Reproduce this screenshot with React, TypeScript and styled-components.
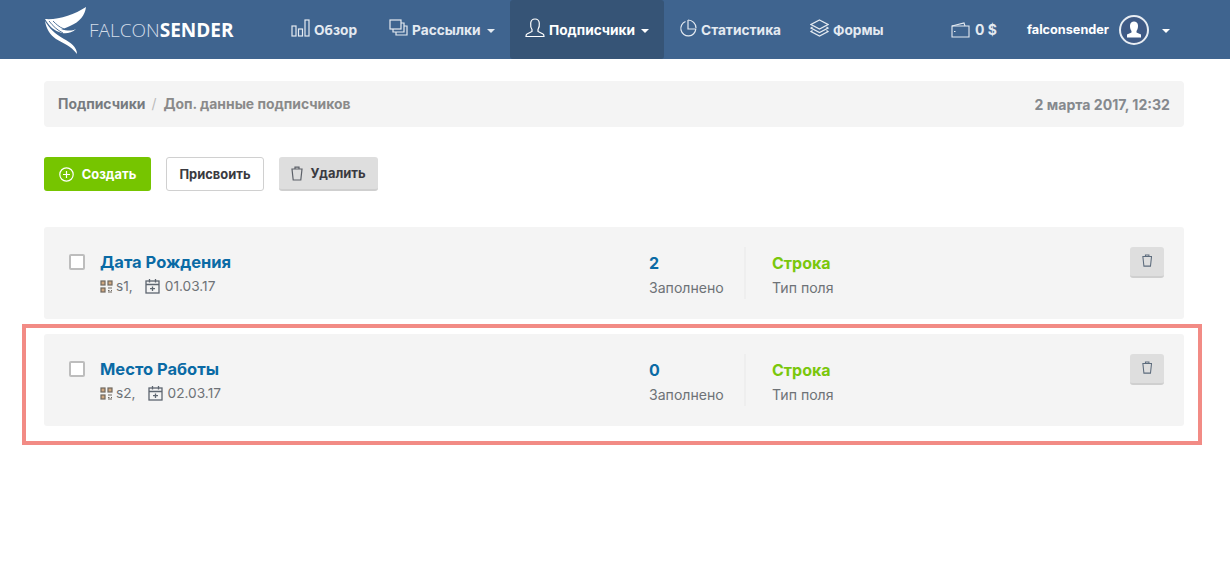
import React from "react";
import styled, { createGlobalStyle } from "styled-components";

const FONT = `"Inter", "Open Sans", "Liberation Sans", sans-serif`;

const Global = createGlobalStyle`
  html, body { margin: 0; padding: 0; background: #fff; }
  body { font-family: ${FONT}; }
  * { box-sizing: border-box; }
`;

const Page = styled.div`
  position: relative;
  width: 1230px;
  height: 565px;
  overflow: hidden;
`;

const Nav = styled.header`
  height: 59px;
  background: #3f648f;
  display: flex;
  align-items: stretch;
  padding-left: 44px;
`;

const Brand = styled.div`
  width: 232px;
  display: flex;
  align-items: center;
  flex: none;
`;

const BrandText = styled.span`
  margin-left: 2px;
  margin-top: 1px;
  font-family: "Open Sans", sans-serif;
  font-size: 19px;
  color: #d4dde8;
  font-weight: 300;
  white-space: nowrap;
  b { color: #fff; font-weight: 700; }
`;

const NavItem = styled.div<{ $active?: boolean; $width: number }>`
  width: ${(p) => p.$width}px;
  flex: none;
  display: flex;
  align-items: center;
  gap: 4px;
  padding: 1px 0 0 15px;
  background: ${(p) => (p.$active ? "#365476" : "transparent")};
  border-radius: ${(p) => (p.$active ? "3px" : "0")};
  color: ${(p) => (p.$active ? "#fff" : "#e4eaf1")};
  font-size: 13.7px;
  font-weight: 700;
  white-space: nowrap;
  svg { margin-top: -4px; }
`;

const Caret = styled.span`
  width: 0;
  height: 0;
  margin-left: 2px;
  margin-top: 2px;
  border-left: 4px solid transparent;
  border-right: 4px solid transparent;
  border-top: 4px solid currentColor;
`;

const Balance = styled.div`
  margin-left: 56px;
  width: 76px;
  flex: none;
  display: flex;
  align-items: center;
  gap: 5px;
  color: #e4eaf1;
  font-size: 14px;
  font-weight: 700;
`;

const User = styled.div`
  flex: none;
  display: flex;
  align-items: center;
  color: #fff;
  font-size: 12.7px;
  font-weight: 700;
`;

const Avatar = styled.span`
  width: 30px;
  height: 30px;
  margin-left: 10px;
  margin-right: 11px;
  border-radius: 50%;
  border: 2px solid #e8edf3;
  background: #3f5a85;
  display: flex;
  align-items: center;
  justify-content: center;
`;

const Main = styled.main`
  padding: 22px 46px 0 44px;
`;

const Crumbs = styled.div`
  height: 46px;
  background: #f4f4f4;
  border-radius: 4px;
  padding: 0 14px;
  display: flex;
  align-items: center;
  font-size: 13.9px;
  font-weight: 700;
  color: #8a8a8a;
`;

const CrumbLink = styled.span`
  color: #777b80;
`;

const CrumbSep = styled.span`
  margin: 0 7px 0 6px;
  font-weight: 400;
  color: #bbb;
`;

const CrumbDate = styled.span`
  margin-left: auto;
  font-size: 14.1px;
  color: #85898e;
`;

const Toolbar = styled.div`
  display: flex;
  gap: 15px;
  margin-top: 30px;
  margin-bottom: 36px;
`;

const Button = styled.button<{ $kind: "create" | "assign" | "remove" }>`
  height: 34px;
  padding: 0;
  width: ${(p) => ({ create: 107, assign: 98, remove: 99 }[p.$kind])}px;
  display: flex;
  align-items: center;
  justify-content: center;
  gap: ${(p) => (p.$kind === "create" ? 8 : 7)}px;
  border-radius: 3px;
  font: 700 12.9px ${FONT};
  color: ${(p) => (p.$kind === "create" ? "#fff" : "#3a3a40")};
  background: ${(p) => ({ create: "#76c500", assign: "#fff", remove: "#dedede" }[p.$kind])};
  border: ${(p) => (p.$kind === "assign" ? "1px solid #d0d0d0" : "0")};
  border-bottom: ${(p) =>
    p.$kind === "remove" ? "2px solid #cfcfcf" : p.$kind === "assign" ? "1px solid #d0d0d0" : "0"};
`;

const Card = styled.section`
  height: 92px;
  background: #f4f4f4;
  border-radius: 3px;
  margin-bottom: 15px;
  display: flex;
  align-items: flex-start;
  padding: 20px 20px 0 25px;
`;

const Check = styled.span`
  width: 16px;
  height: 16px;
  flex: none;
  margin-top: 7px;
  background: #fff;
  border: 2px solid #bdbdbd;
  border-radius: 2px;
`;

const Info = styled.div`
  width: 549px;
  flex: none;
  margin-left: 15px;
`;

const Title = styled.div`
  margin-top: 4px;
  font-size: 16.5px;
  line-height: 22px;
  font-weight: 700;
  color: #0a6aa5;
`;

const Meta = styled.div`
  display: flex;
  align-items: center;
  margin-top: 4px;
  font-size: 13.7px;
  line-height: 18px;
  color: #6e7277;
`;

const MetaGroup = styled.span<{ $inner: number; $after: number }>`
  display: inline-flex;
  align-items: center;
  gap: ${(p) => p.$inner}px;
  margin-right: ${(p) => p.$after}px;
`;

const Stat = styled.div<{ $width: number }>`
  width: ${(p) => p.$width}px;
  flex: none;
`;

const StatBorder = styled(Stat)`
  height: 52px;
  border-right: 2px solid #eeeeee;
`;

const StatValue = styled.div<{ $green?: boolean }>`
  margin-top: 4px;
  font-size: 16px;
  line-height: 24px;
  font-weight: 700;
  color: ${(p) => (p.$green ? "#7ac70c" : "#0a6aa5")};
`;

const StatLabel = styled.div`
  margin-top: 3px;
  font-size: 14.1px;
  line-height: 20px;
  color: #6e7277;
`;

const StatGap = styled.div`
  width: 26px;
  flex: none;
`;

const TrashButton = styled.button`
  width: 34px;
  height: 31px;
  padding: 0 0 2px;
  margin-left: auto;
  background: #dedede;
  border: 0;
  border-bottom: 2px solid #cfcfcf;
  border-radius: 3px;
  display: flex;
  align-items: center;
  justify-content: center;
`;

const Highlight = styled.div`
  position: absolute;
  left: 22px;
  top: 324px;
  width: 1180px;
  height: 121px;
  border: 4px solid #f28b85;
  pointer-events: none;
`;

const Falcon = () => (
  <svg width="43" height="48" viewBox="0 0 43 48" style={{ flex: "none" }}>
    <path fill="#fff" d="M1 13 C14 14 30 9 42 1 C41 9 36 16 26 20 C22 22 19 23 17 23 C23 25 28 25 32 23 C28 27 22 28 18 27 C10 25 5 20 1 13Z" />
    <path fill="#fff" d="M1 15 C2 22 6 29 12 33 C19 37 27 40 33 48 C33 41 26 36 20 33 C11 28 5 22 1 15Z" />
    <path fill="none" stroke="#3f648f" strokeWidth=".9" d="M5 15C9 20 13 24 19 27M9 15C12 18 15 21 20 23" />
  </svg>
);

const IconBars = () => (
  <svg width="19" height="18" viewBox="0 0 19 18" fill="none" stroke="#e4eaf1" strokeWidth="1.2">
    <rect x="1" y="7" width="4" height="10" />
    <rect x="7.5" y="10" width="4" height="7" />
    <rect x="14" y="1" width="4" height="16" />
  </svg>
);
const IconStack = () => (
  <svg width="19" height="18" viewBox="0 0 19 18" fill="none" stroke="#e4eaf1" strokeWidth="1.2">
    <rect x="1" y="1" width="11" height="9" />
    <path d="M4 10v3h11V4h-3" />
    <path d="M7 13v3h11V7h-3" />
  </svg>
);
const IconUser = () => (
  <svg width="20" height="20" viewBox="0 0 20 20" fill="none" stroke="#fff" strokeWidth="1.2">
    <path d="M7 11.5C5.500 9.500 5.500 7 5.700 5 6 2.500 8 1 10 1s4 1.500 4.300 4c.2 2 .2 4.500-1.300 6.500v2l5 2.500c.8.4 1 1.200 1 2.500H1c0-1.300.2-2.100 1-2.500l5-2.500z" />
  </svg>
);
const IconPie = () => (
  <svg width="18" height="18" viewBox="0 0 18 18" fill="none" stroke="#e4eaf1" strokeWidth="1.2">
    <path d="M6.500 2.500A7.500 7.500 0 1 0 16.800 10H9V1" />
    <path d="M9 1a8 8 0 0 1 8 8" />
  </svg>
);
const IconLayers = () => (
  <svg width="19" height="18" viewBox="0 0 19 18" fill="none" stroke="#e4eaf1" strokeWidth="1.2">
    <path d="M9.500 1 18 5.500 9.500 10 1 5.500z" />
    <path d="M2.500 8 1 9l8.500 4.500L18 9l-1.500-1" />
    <path d="M2.500 11.500 1 12.500 9.500 17l8.500-4.500-1.500-1" />
  </svg>
);
const IconWallet = () => (
  <svg width="19" height="16" viewBox="0 0 19 16" fill="none" stroke="#e4eaf1" strokeWidth="1.1">
    <path d="M1 5v10h17V4H1z" />
    <path d="M1 4l12-3 1 3" />
    <path d="M3 9.500h1.500" />
  </svg>
);
const IconPlus = () => (
  <svg width="15" height="15" viewBox="0 0 15 15" fill="none" stroke="#fff" strokeWidth="1.2">
    <circle cx="7.500" cy="7.500" r="6.700" />
    <path d="M7.500 4v7M4 7.500h7" />
  </svg>
);
const IconTrash = ({ size = 15, color = "#5c6068" }: { size?: number; color?: string }) => (
  <svg width={size * 0.8} height={size} viewBox="0 0 12 15" fill="none" stroke={color} strokeWidth="1.2">
    <path d="M1 3h10L9.800 14H2.200z" />
    <path d="M4 3V1.200h4V3" />
  </svg>
);
const IconQr = () => (
  <svg width="13" height="13" viewBox="0 0 13 13" fill="none" stroke="#6e675e" strokeWidth="1.200">
    <rect x="1" y="1" width="4" height="4" fill="#d0a880" />
    <rect x="8" y="1" width="4" height="4" fill="#d0a880" />
    <rect x="1" y="8" width="4" height="4" fill="#d0a880" />
    <path d="M8 8h4M8 10.500h1.500M11 10.500h1M8 12h4" />
  </svg>
);
const IconCalendar = () => (
  <svg width="15" height="16" viewBox="0 0 15 16" fill="none" stroke="#5e6670" strokeWidth="1.300">
    <rect x="1" y="3" width="13" height="12" />
    <path d="M1 6.500h13M4.500 1v3.500M10.500 1v3.500M7.500 8.500v4.500M5 10.700h5" />
  </svg>
);
const IconAvatar = () => (
  <svg width="16" height="17" viewBox="0 0 16 17" fill="#fff">
    <path d="M5.500 10C4 8 4 6 4 4.500 4 2 6 .5 8 .5s4 1.500 4 4c0 1.500 0 3.500-1.500 5.500v1.500l4.500 2v3H1v-3l4.500-2z" />
  </svg>
);

const rows = [
  { title: "Дата Рождения", code: "s1,", date: "01.03.17", filled: "2" },
  { title: "Место Работы", code: "s2,", date: "02.03.17", filled: "0" },
];

export default function App() {
  return (
    <Page>
      <Global />
      <Nav>
        <Brand>
          <Falcon />
          <BrandText>
            FALCON<b>SENDER</b>
          </BrandText>
        </Brand>
        <NavItem $width={98}><IconBars />Обзор</NavItem>
        <NavItem $width={136}><IconStack />Рассылки<Caret /></NavItem>
        <NavItem $active $width={154}><IconUser />Подписчики<Caret /></NavItem>
        <NavItem $width={131}><IconPie />Статистика</NavItem>
        <NavItem $width={100}><IconLayers />Формы</NavItem>
        <Balance><IconWallet />0 $</Balance>
        <User>
          falconsender
          <Avatar><IconAvatar /></Avatar>
          <Caret />
        </User>
      </Nav>
      <Main>
        <Crumbs>
          <CrumbLink>Подписчики</CrumbLink>
          <CrumbSep>/</CrumbSep>
          Доп. данные подписчиков
          <CrumbDate>2 марта 2017, 12:32</CrumbDate>
        </Crumbs>
        <Toolbar>
          <Button $kind="create"><IconPlus />Создать</Button>
          <Button $kind="assign">Присвоить</Button>
          <Button $kind="remove"><IconTrash />Удалить</Button>
        </Toolbar>
        {rows.map((r) => (
          <Card key={r.title}>
            <Check />
            <Info>
              <Title>{r.title}</Title>
              <Meta>
                <MetaGroup $inner={3} $after={12}><IconQr />{r.code}</MetaGroup>
                <MetaGroup $inner={5} $after={0}><IconCalendar />{r.date}</MetaGroup>
              </Meta>
            </Info>
            <StatBorder $width={97}>
              <StatValue>{r.filled}</StatValue>
              <StatLabel>Заполнено</StatLabel>
            </StatBorder>
            <StatGap />
            <Stat $width={120}>
              <StatValue $green>Строка</StatValue>
              <StatLabel>Тип поля</StatLabel>
            </Stat>
            <TrashButton><IconTrash size={13} color="#5c6b7c" /></TrashButton>
          </Card>
        ))}
      </Main>
      <Highlight />
    </Page>
  );
}
